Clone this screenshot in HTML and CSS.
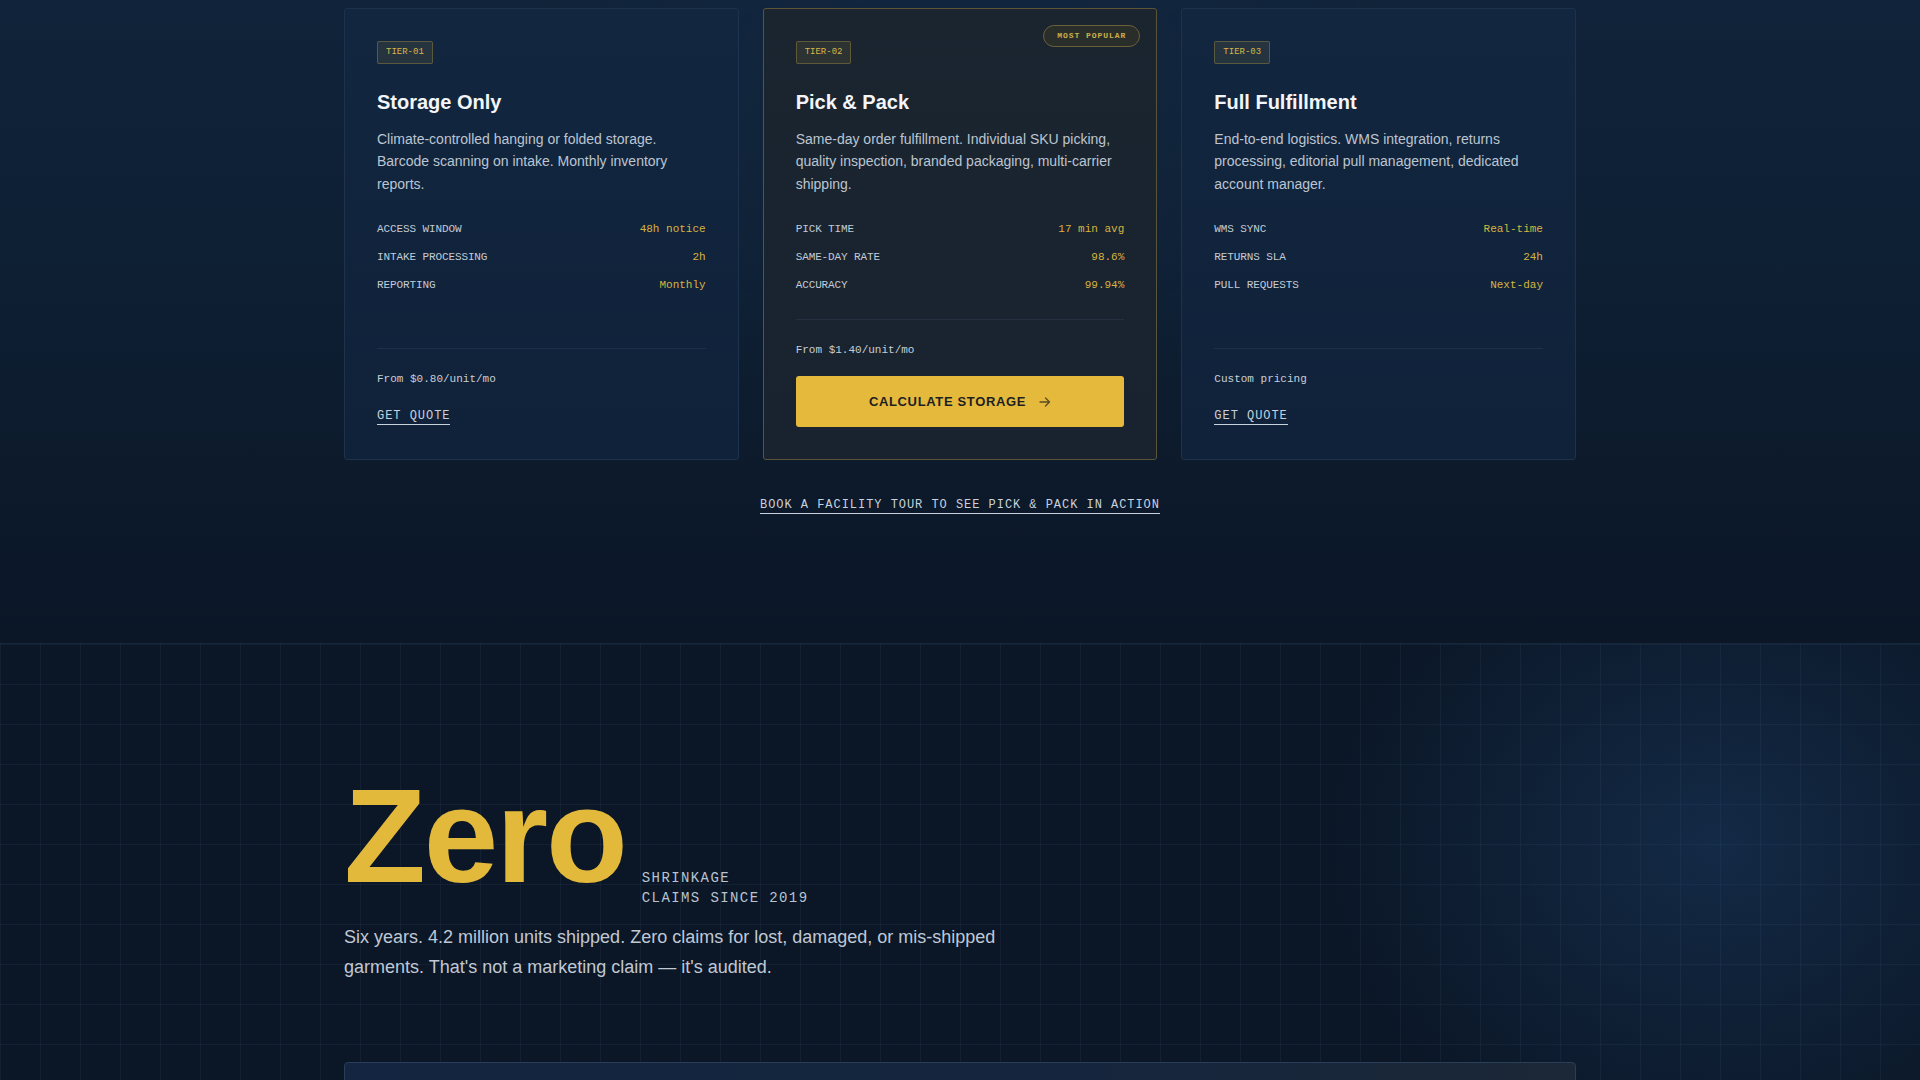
FILE: index.html
```html
<!DOCTYPE html>
<html lang="en">
<head>
<meta charset="utf-8">
<title>Pricing tiers</title>
<link rel="stylesheet" href="styles.css">
</head>
<body>
<section class="pricing">
  <div class="wrap">
    <div class="tiers">
      <article class="tier">
        <span class="tag">TIER-01</span>
        <h3 class="tier-title">Storage Only</h3>
        <p class="tier-desc">Climate-controlled hanging or folded storage. Barcode scanning on intake. Monthly inventory reports.</p>
        <dl class="specs">
          <div class="spec"><dt>ACCESS WINDOW</dt><dd>48h notice</dd></div>
          <div class="spec"><dt>INTAKE PROCESSING</dt><dd>2h</dd></div>
          <div class="spec"><dt>REPORTING</dt><dd>Monthly</dd></div>
        </dl>
        <div class="tier-foot">
          <p class="price">From $0.80/unit/mo</p>
          <a class="link" href="#">GET QUOTE</a>
        </div>
      </article>
      <article class="tier tier-featured">
        <span class="pill">MOST POPULAR</span>
        <span class="tag">TIER-02</span>
        <h3 class="tier-title">Pick &amp; Pack</h3>
        <p class="tier-desc">Same-day order fulfillment. Individual SKU picking, quality inspection, branded packaging, multi-carrier shipping.</p>
        <dl class="specs">
          <div class="spec"><dt>PICK TIME</dt><dd>17 min avg</dd></div>
          <div class="spec"><dt>SAME-DAY RATE</dt><dd>98.6%</dd></div>
          <div class="spec"><dt>ACCURACY</dt><dd>99.94%</dd></div>
        </dl>
        <div class="tier-foot">
          <p class="price">From $1.40/unit/mo</p>
          <a class="btn" href="#">CALCULATE STORAGE
            <svg class="btn-arrow" viewBox="0 0 12 12" width="12" height="12" aria-hidden="true"><path d="M1 6h9.5M6.5 2l4 4-4 4" fill="none" stroke="currentColor" stroke-width="1.3" stroke-linecap="round" stroke-linejoin="round"/></svg>
          </a>
        </div>
      </article>
      <article class="tier">
        <span class="tag">TIER-03</span>
        <h3 class="tier-title">Full Fulfillment</h3>
        <p class="tier-desc">End-to-end logistics. WMS integration, returns processing, editorial pull management, dedicated account manager.</p>
        <dl class="specs">
          <div class="spec"><dt>WMS SYNC</dt><dd>Real-time</dd></div>
          <div class="spec"><dt>RETURNS SLA</dt><dd>24h</dd></div>
          <div class="spec"><dt>PULL REQUESTS</dt><dd>Next-day</dd></div>
        </dl>
        <div class="tier-foot">
          <p class="price">Custom pricing</p>
          <a class="link" href="#">GET QUOTE</a>
        </div>
      </article>
    </div>
    <div class="tour"><a class="link" href="#">BOOK A FACILITY TOUR TO SEE PICK &amp; PACK IN ACTION</a></div>
  </div>
</section>
<section class="proof">
  <div class="wrap">
    <div class="stat">
      <span class="stat-num">Zero</span>
      <span class="stat-label">SHRINKAGE<br>CLAIMS SINCE 2019</span>
    </div>
    <p class="stat-copy">Six years. 4.2 million units shipped. Zero claims for lost, damaged, or mis-shipped garments. That's not a marketing claim — it's audited.</p>
    <div class="panel"></div>
  </div>
</section>
</body>
</html>
```

FILE: styles.css
```css
* { box-sizing: border-box; }
html, body { margin: 0; padding: 0; }
body {
  background: #0b1727;
  font-family: "Liberation Sans", Arial, sans-serif;
  color: #c2cad6;
  overflow: hidden;
  height: 1080px;
}
.wrap {
  width: 1232px;
  margin: 0 auto;
}

/* ---------- pricing ---------- */
.pricing {
  padding: 8px 0 127px;
  background:
    radial-gradient(ellipse 700px 400px at 50% 20%, rgba(30, 60, 95, 0.18), transparent 70%),
    linear-gradient(180deg, #10233a 0%, #0e1f33 45%, #0c192a 80%, #0b1727 100%);
}
.tiers {
  display: grid;
  grid-template-columns: repeat(3, 1fr);
  gap: 24px;
}
.tier {
  position: relative;
  display: flex;
  flex-direction: column;
  align-items: flex-start;
  padding: 32px;
  border: 1px solid #1d324c;
  border-radius: 3px;
  background: linear-gradient(180deg, #12263f 0%, #10223a 100%);
}
.tier-featured {
  border-color: #5a5538;
  background: linear-gradient(180deg, #1a2530 0%, #18232f 100%);
}
.tag {
  display: inline-block;
  padding: 5px 8px;
  font-family: "Liberation Mono", monospace;
  font-size: 9px;
  line-height: 11px;
  color: #d6b74a;
  background: rgba(212, 178, 70, 0.1);
  border: 1px solid rgba(212, 178, 70, 0.3);
  border-radius: 2px;
}
.pill {
  position: absolute;
  top: 16px;
  right: 16px;
  padding: 5px 13px;
  font-family: "Liberation Mono", monospace;
  font-size: 8px;
  font-weight: bold;
  line-height: 10px;
  letter-spacing: 0.12em;
  color: #cfae4a;
  background: #2a2e2a;
  border: 1px solid #6a6035;
  border-radius: 999px;
}
.tier-title {
  margin: 26px 0 0;
  font-size: 20px;
  line-height: 24px;
  font-weight: bold;
  color: #f3f5f8;
}
.tier-desc {
  margin: 14px 0 0;
  font-size: 14px;
  line-height: 22.4px;
  color: #bcc5d1;
}
.specs {
  width: 100%;
  margin: 20px 0 0;
}
.spec {
  display: flex;
  justify-content: space-between;
  padding: 6px 0;
  font-family: "Liberation Mono", monospace;
  font-size: 11px;
  line-height: 16px;
}
.spec dt { color: #c3cbd5; letter-spacing: -0.01em; }
.spec dd { margin: 0; color: #d8b340; }
.tier-foot {
  width: 100%;
  margin-top: auto;
  padding-top: 22px;
  border-top: 1px solid rgba(120, 150, 185, 0.12);
  display: flex;
  flex-direction: column;
  align-items: flex-start;
  gap: 18px;
}
.tier-featured .tier-foot { margin-top: 20px; }
.price {
  margin: 0;
  font-family: "Liberation Mono", monospace;
  font-size: 11px;
  line-height: 16px;
  color: #c8ced7;
}
.link {
  display: inline-block;
  padding-top: 3px;
  margin-bottom: 2px;
  font-family: "Liberation Mono", monospace;
  font-size: 12px;
  line-height: 16px;
  letter-spacing: 0.08em;
  color: #c9d1dc;
  text-decoration: none;
  border-bottom: 1px solid #c9d1dc;
}
.btn {
  display: flex;
  align-items: center;
  justify-content: center;
  gap: 13px;
  width: 100%;
  height: 51px;
  font-size: 13px;
  font-weight: bold;
  letter-spacing: 0.05em;
  color: #1d1f22;
  text-decoration: none;
  background: #e4b93c;
  border-radius: 3px;
}
.btn-arrow { color: #5b4c22; }
.tour {
  margin-top: 34px;
  text-align: center;
}

/* ---------- proof ---------- */
.proof {
  height: 437px;
  padding-top: 125px;
  border-top: 1px solid #17273a;
  background-color: #0b1727;
  background-image:
    linear-gradient(rgba(90, 130, 175, 0.09) 1px, transparent 1px),
    linear-gradient(90deg, rgba(90, 130, 175, 0.09) 1px, transparent 1px),
    radial-gradient(ellipse 520px 440px at 1715px 200px, rgba(22, 48, 80, 0.75), transparent 75%);
  background-size: 40px 40px, 40px 40px, 100% 100%;
}
.stat {
  display: flex;
  align-items: baseline;
  gap: 16px;
}
.stat-num {
  font-size: 134px;
  line-height: 1;
  font-weight: bold;
  letter-spacing: -0.016em;
  color: #e3b93b;
}
.stat-label {
  font-family: "Liberation Mono", monospace;
  font-size: 14px;
  line-height: 20px;
  letter-spacing: 0.1em;
  color: #b9c3cf;
}
.stat-copy {
  max-width: 680px;
  margin: 14px 0 0;
  font-size: 18px;
  line-height: 30px;
  color: #c0c8d4;
}
.panel {
  margin-top: 80px;
  height: 200px;
  border: 1px solid #2a3f57;
  border-radius: 4px;
  background: linear-gradient(90deg, #132540 0%, #15253d 60%, #1c2837 100%);
}
```
